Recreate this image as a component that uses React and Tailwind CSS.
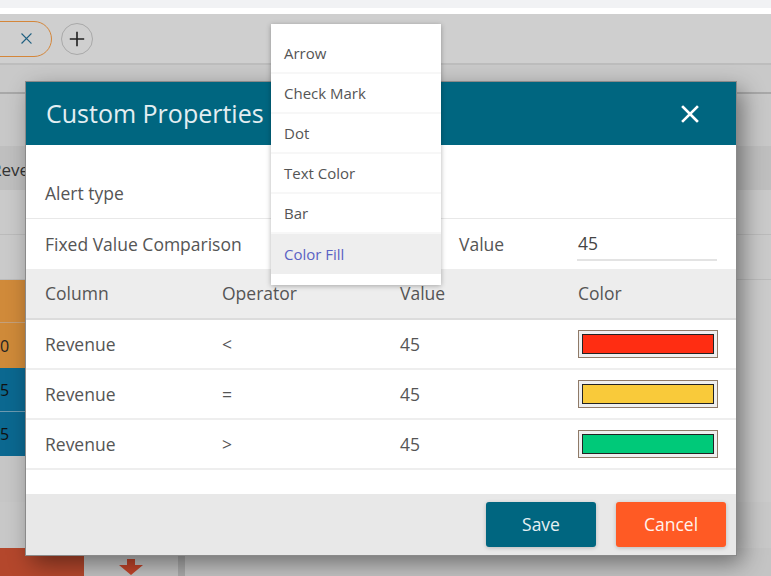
import { useState } from 'react';

const font = { fontFamily: '"Open Sans", "Noto Sans", sans-serif' };

const alertTypes = ['Arrow', 'Check Mark', 'Dot', 'Text Color', 'Bar', 'Color Fill'];

const rules = [
  { column: 'Revenue', op: '<', value: '45', color: 'bg-[#ff2d12]' },
  { column: 'Revenue', op: '=', value: '45', color: 'bg-[#f9ca3a]' },
  { column: 'Revenue', op: '>', value: '45', color: 'bg-[#00c979]' },
];

function XIcon({ className, stroke = 'currentColor', width = 2 }) {
  return (
    <svg viewBox="0 0 20 20" className={className} fill="none" stroke={stroke} strokeWidth={width} strokeLinecap="square">
      <path d="M3 3 L17 17 M17 3 L3 17" />
    </svg>
  );
}

// dimmed page that sits behind the dialog
function Backdrop() {
  return (
    <div className="flex flex-col h-full">
      <div className="h-[8px] bg-[#f1f2f4] shrink-0" />
      <div className="h-[6px] bg-white shrink-0" />
      <div className="h-[51px] shrink-0 bg-[#cfcfcf] border-b-2 border-[#bdbdbd] flex items-center gap-[9px]">
        <div className="h-[36px] w-[80px] -ml-[28px] rounded-full border border-[#d4863a] flex items-center justify-end pr-[18px]">
          <XIcon className="w-[13px] h-[13px]" stroke="#1e5f80" width={1.8} />
        </div>
        <div className="w-[32px] h-[32px] rounded-full border border-[#a9a9a9] flex items-center justify-center">
          <svg viewBox="0 0 20 20" className="w-[18px] h-[18px]" stroke="#222" strokeWidth="1.8">
            <path d="M10 2 V18 M2 10 H18" />
          </svg>
        </div>
      </div>
      <div className="flex-1 bg-[#cbcbcb] flex flex-col">
        <div className="h-[29px] border-b-2 border-[#a8a8a8] bg-[#c9c9c9]" />
        <div className="h-[52px] bg-[#c8c8c8]" />
        <div className="h-[44px] bg-[#bfbfbf] flex items-center pt-[4px] text-[17px] text-[#333] overflow-hidden" style={font}>
          <span className="-ml-[9px] whitespace-nowrap">Revenue</span>
        </div>
        <div className="h-[45px] bg-[#cacaca] border-b border-[#bbbbbb]" />
        <div className="h-[45px] bg-[#cacaca] border-b border-[#bbbbbb]" />
        <div className="h-[43px] bg-[#d08a3a] border-b border-[#c4a07a] w-[40px]" />
        <div className="h-[45px] bg-[#cf8a39] w-[40px] flex items-center text-[16px] text-[#222]" style={font}>0</div>
        <div className="h-[44px] bg-[#0b6890] border-b border-[#6c9ab0] w-[40px] flex items-center text-[16px] text-[#111]" style={font}>5</div>
        <div className="h-[44px] bg-[#0b6890] w-[40px] flex items-center text-[16px] text-[#111]" style={font}>5</div>
        <div className="h-[46px] bg-[#c6c6c6] w-[40px]" />
        <div className="h-[46px] bg-[#c8c8c8]" />
        <div className="flex-1 flex">
          <div className="w-[84px] bg-[#b4472c]" />
          <div className="w-[94px] bg-[#c2c2c2] flex justify-center pt-[11px]">
            <svg viewBox="0 0 24 16" className="w-[24px] h-[16px]">
              <path d="M8 0 H16 V6 H24 L12 16 L0 6 H8 Z" fill="#c0442a" />
            </svg>
          </div>
          <div className="w-[7px] bg-[#a9a9a9]" />
          <div className="flex-1 bg-[#c4c4c4]" />
        </div>
      </div>
    </div>
  );
}

function Swatch({ color }) {
  return (
    <div className="w-[140px] h-[28px] border border-[#8f7a68] bg-[#efefef] p-[3px]">
      <div className={`w-full h-full border border-[#222] ${color}`} />
    </div>
  );
}

export default function App() {
  const [selected, setSelected] = useState('Color Fill');

  return (
    <div className="relative w-[771px] h-[576px] overflow-hidden bg-[#cccccc]" style={font}>
      <Backdrop />

      {/* dialog */}
      <div className="absolute left-[26px] top-[82px] w-[710px] flex flex-col bg-white shadow-[0_0_0_1px_#8a8a8a,6px_8px_22px_rgba(0,0,0,0.45)]">
        <div className="h-[63px] bg-[#006680] flex items-center justify-between pl-[20px] pr-[36px]">
          <h1 className="text-[25px] text-[#e3eef2] font-normal">Custom Properties</h1>
          <XIcon className="w-[20px] h-[20px]" stroke="#ffffff" width={2.6} />
        </div>

        <div className="h-[74px] flex items-end pb-[12px] px-[19px] border-b border-[#e8e8e8] text-[17.5px] text-[#555]">
          Alert type
        </div>

        <div className="h-[50px] flex items-center px-[19px] text-[17.5px] text-[#555]">
          <span className="w-[414px]">Fixed Value Comparison</span>
          <span className="w-[118px]">Value</span>
          <div className="w-[140px] h-[34px] border-b-2 border-[#e3e3e3] flex items-end pb-[3px] pl-[1px] text-[#444]">45</div>
        </div>

        <div className="h-[51px] bg-[#ededed] border-b-2 border-[#dcdcdc] grid grid-cols-[177px_178px_178px_1fr] items-center px-[19px] text-[17.5px] text-[#555]">
          <span>Column</span>
          <span>Operator</span>
          <span>Value</span>
          <span>Color</span>
        </div>

        {rules.map((r, i) => (
          <div key={i} className="h-[50px] border-b-2 border-[#eeeeee] grid grid-cols-[177px_178px_178px_1fr] items-center px-[19px] text-[17.5px] text-[#555]">
            <span>{r.column}</span>
            <span>{r.op}</span>
            <span>{r.value}</span>
            <Swatch color={r.color} />
          </div>
        ))}

        <div className="h-[24px]" />

        <div className="h-[61px] bg-[#e8e8e8] flex items-center justify-end gap-[20px] pr-[10px]">
          <button className="w-[110px] h-[45px] rounded-[3px] bg-[#006680] text-[17.5px] text-[#e6f0f3] shadow-[0_1px_4px_rgba(0,0,0,0.2)]">Save</button>
          <button className="w-[110px] h-[45px] rounded-[3px] bg-[#ff5a24] text-[17.5px] text-[#fff3ee] shadow-[0_1px_4px_rgba(0,0,0,0.2)]">Cancel</button>
        </div>
      </div>

      {/* alert type dropdown */}
      <ul className="absolute left-[271px] top-[24px] w-[170px] bg-white pt-[10px] pb-[11px] shadow-[0_1px_5px_rgba(0,0,0,0.3)]">
        {alertTypes.map((t, i) => (
          <li
            key={t}
            onClick={() => setSelected(t)}
            className={`h-[40px] flex items-center px-[13px] text-[15px] ${
              i < alertTypes.length - 1 ? 'border-b-2 border-[#f7f7f7]' : ''
            } ${selected === t ? 'bg-[#eeeeee] text-[#5a62c4]' : 'text-[#555]'}`}
          >
            {t}
          </li>
        ))}
      </ul>
    </div>
  );
}
